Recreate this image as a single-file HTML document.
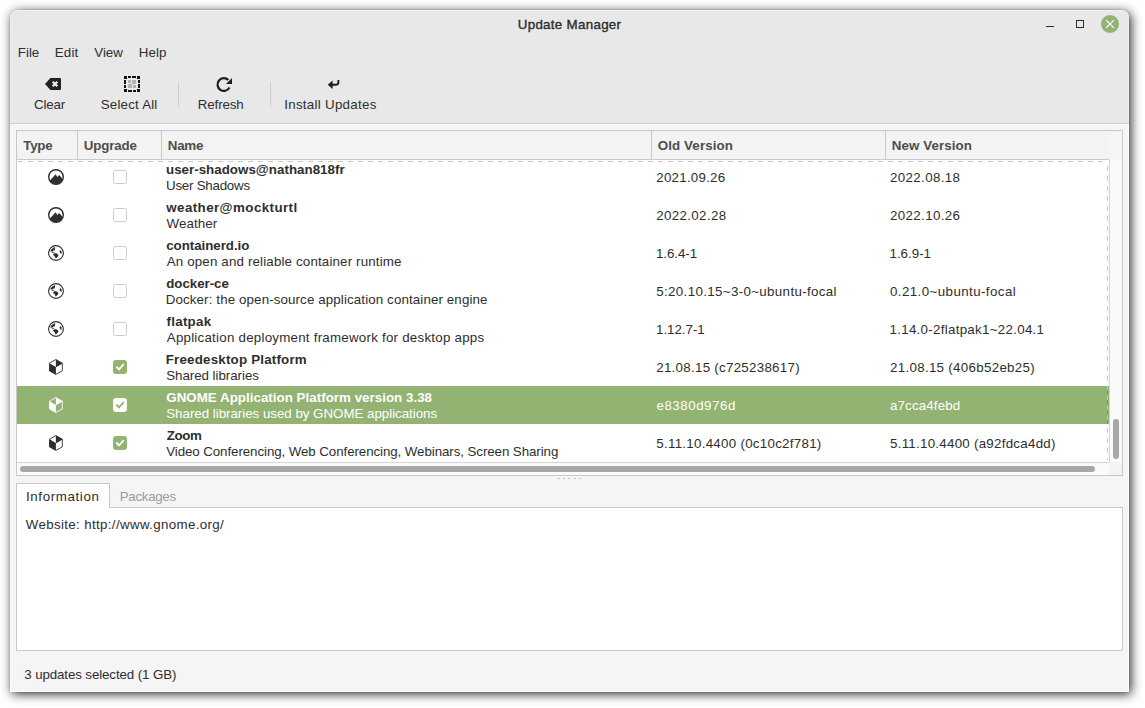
<!DOCTYPE html>
<html lang="en"><head><meta charset="utf-8"><title>Update Manager</title>
<style>
html,body{margin:0;padding:0}
body{width:1145px;height:708px;overflow:hidden;background:#fff;position:relative;font-family:"Liberation Sans", sans-serif;font-size:13.33px}
.abs,.t,.ic,.cb{position:absolute}
.t{white-space:pre;line-height:16px;height:16px}
.win{position:absolute;left:10px;top:10px;width:1119px;height:682px;background:#f5f5f5;border-radius:7px 7px 0 0;box-shadow:0 0 0 1px rgba(0,0,0,.05),2px 2px 11px 0 rgba(0,0,0,.84)}
.top{position:absolute;left:10px;top:10px;width:1119px;height:113px;background:#e8e8e8;border-radius:7px 7px 0 0;border-bottom:1px solid #cfcfcf}
.cb{width:12px;height:12px;border:1px solid #cdcdcd;border-radius:2.5px;background:#fff}
.sep{position:absolute;width:1px;background:#cfcfcf;top:82px;height:25px}
</style></head><body>
<div class="win"></div>
<div class="top"></div>
<div class="abs" style="left:16px;top:10px;width:1107px;height:1px;background:#f2f2f2"></div>
<div class="abs" style="left:1128px;top:17px;width:1px;height:675px;background:linear-gradient(180deg,#eee 0,#eee 106px,#cfcfcf 106px,#cfcfcf 107px,#fff 107px)"></div>
<div class="abs" style="left:10px;top:17px;width:1px;height:675px;background:linear-gradient(180deg,#eee 0,#eee 106px,#cfcfcf 106px,#cfcfcf 107px,#fbfbfb 107px)"></div>
<div class="abs" style="left:10px;top:691px;width:1119px;height:1px;background:#fff"></div>
<!-- window buttons -->
<div class="abs" style="left:1046px;top:26px;width:8px;height:1px;background:#2e2e2e"></div>
<div class="abs" style="left:1076px;top:20px;width:6px;height:6px;border:1px solid #2e2e2e"></div>
<div class="abs" style="left:1101px;top:15px;width:18px;height:18px;border-radius:9px;background:#92b372"></div>
<svg class="abs" style="left:1101px;top:15px" width="18" height="18" viewBox="0 0 18 18"><path d="M5.1 5.1 L12.9 12.9 M12.9 5.1 L5.1 12.9" stroke="#fff" stroke-width="1.25" fill="none"/></svg>
<!-- toolbar icons -->
<svg class="abs" style="left:45px;top:78px" width="16" height="12" viewBox="0 0 16 12"><path fill="#222" d="M5.4 0 H15 Q16 0 16 1 V11 Q16 12 15 12 H5.4 L0 6Z"/><path d="M7.7 3.7 L12.3 8.3 M12.3 3.7 L7.7 8.3" stroke="#ececec" stroke-width="2.2" fill="none"/></svg>
<svg class="abs" style="left:124px;top:76px" width="16" height="16" viewBox="0 0 16 16"><g fill="#141414"><rect x="0" y="0" width="3" height="3"/><rect x="13" y="0" width="3" height="3"/><rect x="0" y="13" width="3" height="3"/><rect x="13" y="13" width="3" height="3"/><rect x="4" y="0" width="3" height="2"/><rect x="8" y="0" width="4" height="2"/><rect x="4" y="14" width="4" height="2"/><rect x="9" y="14" width="3" height="2"/><rect x="0" y="4" width="2" height="4"/><rect x="0" y="9" width="2" height="3"/><rect x="14" y="4" width="2" height="3"/><rect x="14" y="8" width="2" height="4"/></g><g fill="#b3b3b3"><rect x="4" y="4" width="3" height="3"/><rect x="8" y="4" width="4" height="4"/><rect x="4" y="8" width="4" height="4"/><rect x="9" y="9" width="3" height="3"/></g></svg>
<svg class="abs" style="left:215px;top:76px" width="18" height="18" viewBox="0 0 18 18"><path d="M14.5 11.5 A6.35 6.35 0 1 1 13.4 4.1" fill="none" stroke="#1e1e1e" stroke-width="2.2"/><path fill="#1e1e1e" d="M17 1.9 V7.9 H11Z"/></svg>
<svg class="abs" style="left:327px;top:79px" width="14" height="12" viewBox="0 0 14 12"><path d="M11.4 1 V3.2 Q11.4 5.7 8.6 5.7 H4.5" fill="none" stroke="#1e1e1e" stroke-width="1.9"/><path fill="#1e1e1e" d="M0.8 5.7 L5.6 1.4 L5.6 10.0Z"/></svg>
<div class="sep" style="left:178px"></div>
<div class="sep" style="left:270px"></div>
<!-- table frame -->
<div class="abs" style="left:16px;top:130px;width:1105px;height:344px;border:1px solid #c8c8c8;background:#fff"></div>
<div class="abs" style="left:17px;top:131px;width:1092px;height:28px;background:#f3f3f3;border-bottom:1px solid #c8c8c8"></div>
<div class="abs" style="left:1109px;top:131px;width:13px;height:29px;background:#f5f5f5"></div>
<div class="abs" style="left:77px;top:131px;width:1px;height:28px;background:#c8c8c8"></div>
<div class="abs" style="left:161px;top:131px;width:1px;height:28px;background:#c8c8c8"></div>
<div class="abs" style="left:651px;top:131px;width:1px;height:28px;background:#c8c8c8"></div>
<div class="abs" style="left:885px;top:131px;width:1px;height:28px;background:#c8c8c8"></div>
<!-- selected row -->
<div class="abs" style="left:17px;top:386px;width:1092px;height:38px;background:#92b372"></div>
<!-- dashed focus lines -->
<div class="abs" style="left:18px;top:161px;width:1089px;height:1px;background:repeating-linear-gradient(90deg,#cacaca 0 5px,transparent 5px 10px)"></div>
<div class="abs" style="left:1107px;top:162px;width:1px;height:224px;background:repeating-linear-gradient(180deg,transparent 0 4px,#cacaca 4px 9px,transparent 9px 10px)"></div>
<div class="abs" style="left:1107px;top:386px;width:1px;height:38px;background:repeating-linear-gradient(180deg,#b7cda0 0 4px,#7d9a60 4px 9px,#b7cda0 9px 10px)"></div>
<div class="abs" style="left:1107px;top:424px;width:1px;height:36px;background:repeating-linear-gradient(180deg,transparent 0 4px,#cacaca 4px 9px,transparent 9px 10px)"></div>
<!-- scrollbars -->
<div class="abs" style="left:1109px;top:160px;width:12px;height:302px;background:#fafafa;border-left:1px solid #d6d6d6"></div>
<div class="abs" style="left:1113px;top:419px;width:6px;height:40px;border-radius:3px;background:#a8a8a8"></div>
<div class="abs" style="left:17px;top:462px;width:1105px;height:12px;background:#fafafa;border-top:1px solid #d6d6d6"></div>
<div class="abs" style="left:1109px;top:462px;width:13px;height:13px;background:#f3f3f3"></div>
<div class="abs" style="left:20px;top:466px;width:1075px;height:6px;border-radius:3px;background:#a8a8a8"></div>
<!-- pane handle -->
<svg class="abs" style="left:556px;top:477px" width="28" height="3" viewBox="0 0 28 3"><g fill="#bcbcbc"><rect x="1.7" y="1" width="2" height="1"/><rect x="6.9" y="1" width="2" height="1"/><rect x="12.4" y="1" width="2" height="1"/><rect x="17.9" y="1" width="2" height="1"/><rect x="23.3" y="1" width="2" height="1"/></g></svg>
<!-- notebook -->
<div class="abs" style="left:16px;top:507px;width:1105px;height:142px;border:1px solid #c8c8c8;background:#fff"></div>
<div class="abs" style="left:16px;top:483px;width:92px;height:23px;border:1px solid #c8c8c8;border-bottom:none;background:#fff"></div>
<div class="abs" style="left:17px;top:507px;width:92px;height:1px;background:#fff"></div>
<svg class="ic" style="left:48px;top:169px" width="16" height="16" viewBox="0 0 16 16"><defs><clipPath id="c56_177"><circle cx="8" cy="8" r="7.2"/></clipPath></defs><path clip-path="url(#c56_177)" fill="#2e2e2e" d="M0 13.5 L7.7 5.2 L9.3 8.0 L11.2 6.0 L16 11.5 L16 16 L0 16Z"/><circle cx="8" cy="8" r="7.3" fill="none" stroke="#2e2e2e" stroke-width="1.4"/></svg>
<div class="cb" style="left:113px;top:170px"></div>
<svg class="ic" style="left:48px;top:207px" width="16" height="16" viewBox="0 0 16 16"><defs><clipPath id="c56_215"><circle cx="8" cy="8" r="7.2"/></clipPath></defs><path clip-path="url(#c56_215)" fill="#2e2e2e" d="M0 13.5 L7.7 5.2 L9.3 8.0 L11.2 6.0 L16 11.5 L16 16 L0 16Z"/><circle cx="8" cy="8" r="7.3" fill="none" stroke="#2e2e2e" stroke-width="1.4"/></svg>
<div class="cb" style="left:113px;top:208px"></div>
<svg class="ic" style="left:48px;top:245px" width="16" height="16" viewBox="0 0 16 16"><circle cx="8" cy="8" r="7.4" fill="none" stroke="#2e2e2e" stroke-width="1.1"/><path fill="#2e2e2e" d="M2.2 6.2 L3.2 4.6 L4.0 4.0 L4.4 3.2 L5.2 3.4 L5.6 2.6 L6.5 2.2 L7.3 2.5 L6.9 3.6 L7.0 4.6 L6.8 5.6 L6.0 5.4 L5.4 5.2 L5.2 6.0 L5.0 6.6 L3.6 6.5Z"/><path fill="#2e2e2e" d="M3.4 6.5 L6.5 7.7 L6.3 8.4 L3.6 7.2Z"/><path fill="#2e2e2e" d="M6.5 8.2 L8.0 8.2 L9.3 8.7 L10.4 9.9 L10.1 11.3 L9.0 12.4 L7.6 13.5 L7.0 12.1 L6.5 11.0 L5.1 10.1 L5.3 9.3Z"/><path fill="#2e2e2e" d="M12.4 5.1 L13.3 6.2 L13.7 8.2 L13.3 9.0 L12.1 7.9 L11.6 6.5Z"/></svg>
<div class="cb" style="left:113px;top:246px"></div>
<svg class="ic" style="left:48px;top:283px" width="16" height="16" viewBox="0 0 16 16"><circle cx="8" cy="8" r="7.4" fill="none" stroke="#2e2e2e" stroke-width="1.1"/><path fill="#2e2e2e" d="M2.2 6.2 L3.2 4.6 L4.0 4.0 L4.4 3.2 L5.2 3.4 L5.6 2.6 L6.5 2.2 L7.3 2.5 L6.9 3.6 L7.0 4.6 L6.8 5.6 L6.0 5.4 L5.4 5.2 L5.2 6.0 L5.0 6.6 L3.6 6.5Z"/><path fill="#2e2e2e" d="M3.4 6.5 L6.5 7.7 L6.3 8.4 L3.6 7.2Z"/><path fill="#2e2e2e" d="M6.5 8.2 L8.0 8.2 L9.3 8.7 L10.4 9.9 L10.1 11.3 L9.0 12.4 L7.6 13.5 L7.0 12.1 L6.5 11.0 L5.1 10.1 L5.3 9.3Z"/><path fill="#2e2e2e" d="M12.4 5.1 L13.3 6.2 L13.7 8.2 L13.3 9.0 L12.1 7.9 L11.6 6.5Z"/></svg>
<div class="cb" style="left:113px;top:284px"></div>
<svg class="ic" style="left:48px;top:321px" width="16" height="16" viewBox="0 0 16 16"><circle cx="8" cy="8" r="7.4" fill="none" stroke="#2e2e2e" stroke-width="1.1"/><path fill="#2e2e2e" d="M2.2 6.2 L3.2 4.6 L4.0 4.0 L4.4 3.2 L5.2 3.4 L5.6 2.6 L6.5 2.2 L7.3 2.5 L6.9 3.6 L7.0 4.6 L6.8 5.6 L6.0 5.4 L5.4 5.2 L5.2 6.0 L5.0 6.6 L3.6 6.5Z"/><path fill="#2e2e2e" d="M3.4 6.5 L6.5 7.7 L6.3 8.4 L3.6 7.2Z"/><path fill="#2e2e2e" d="M6.5 8.2 L8.0 8.2 L9.3 8.7 L10.4 9.9 L10.1 11.3 L9.0 12.4 L7.6 13.5 L7.0 12.1 L6.5 11.0 L5.1 10.1 L5.3 9.3Z"/><path fill="#2e2e2e" d="M12.4 5.1 L13.3 6.2 L13.7 8.2 L13.3 9.0 L12.1 7.9 L11.6 6.5Z"/></svg>
<div class="cb" style="left:113px;top:322px"></div>
<svg class="ic" style="left:48px;top:359px" width="16" height="16" viewBox="0 0 16 16"><path fill="#ffffff" stroke="#2e2e2e" stroke-width="0.9" stroke-linejoin="round" d="M7.9 0.5 L14.3 4.2 L14.3 11.9 L7.9 15.4 L1.5 11.9 L1.5 4.2Z"/><path fill="#2e2e2e" d="M1.5 4.2 L7.9 7.9 L7.9 15.4 L1.5 11.9Z"/><path fill="#2e2e2e" d="M7.9 0.5 L14.3 4.2 L7.9 7.9Z"/><path fill="none" stroke="#2e2e2e" stroke-width="0.9" d="M7.9 7.9 L14.3 4.2"/></svg>
<div class="cb on" style="left:113px;top:360px;background:#92b372;border-color:#92b372"><svg width="14" height="14" viewBox="0 0 14 14" style="position:absolute;left:-1px;top:-1px"><path d="M3.9 7.3 L6.0 9.3 L10.1 4.9" fill="none" stroke="#ffffff" stroke-width="1.9" stroke-linecap="square" stroke-linejoin="miter"/></svg></div>
<svg class="ic" style="left:48px;top:397px" width="16" height="16" viewBox="0 0 16 16"><path fill="#92b372" stroke="#ffffff" stroke-width="0.9" stroke-linejoin="round" d="M7.9 0.5 L14.3 4.2 L14.3 11.9 L7.9 15.4 L1.5 11.9 L1.5 4.2Z"/><path fill="#ffffff" d="M1.5 4.2 L7.9 7.9 L7.9 15.4 L1.5 11.9Z"/><path fill="#ffffff" d="M7.9 0.5 L14.3 4.2 L7.9 7.9Z"/><path fill="none" stroke="#ffffff" stroke-width="0.9" d="M7.9 7.9 L14.3 4.2"/></svg>
<div class="cb on" style="left:113px;top:398px;background:#ffffff;border-color:#ffffff"><svg width="14" height="14" viewBox="0 0 14 14" style="position:absolute;left:-1px;top:-1px"><path d="M3.9 7.3 L6.0 9.3 L10.1 4.9" fill="none" stroke="#92b372" stroke-width="1.9" stroke-linecap="square" stroke-linejoin="miter"/></svg></div>
<svg class="ic" style="left:48px;top:435px" width="16" height="16" viewBox="0 0 16 16"><path fill="#ffffff" stroke="#2e2e2e" stroke-width="0.9" stroke-linejoin="round" d="M7.9 0.5 L14.3 4.2 L14.3 11.9 L7.9 15.4 L1.5 11.9 L1.5 4.2Z"/><path fill="#2e2e2e" d="M1.5 4.2 L7.9 7.9 L7.9 15.4 L1.5 11.9Z"/><path fill="#2e2e2e" d="M7.9 0.5 L14.3 4.2 L7.9 7.9Z"/><path fill="none" stroke="#2e2e2e" stroke-width="0.9" d="M7.9 7.9 L14.3 4.2"/></svg>
<div class="cb on" style="left:113px;top:436px;background:#92b372;border-color:#92b372"><svg width="14" height="14" viewBox="0 0 14 14" style="position:absolute;left:-1px;top:-1px"><path d="M3.9 7.3 L6.0 9.3 L10.1 4.9" fill="none" stroke="#ffffff" stroke-width="1.9" stroke-linecap="square" stroke-linejoin="miter"/></svg></div>
<span class="t" id="title" style="left:517.75px;top:17.00px;letter-spacing:0.307px;color:#2b2b2b;-webkit-text-stroke:0.35px #2b2b2b;">Update Manager</span>
<span class="t" id="m1" style="left:17.75px;top:45.00px;letter-spacing:0.016px;color:#2e2e2e;">File</span>
<span class="t" id="m2" style="left:54.75px;top:45.00px;letter-spacing:0.166px;color:#2e2e2e;">Edit</span>
<span class="t" id="m3" style="left:94.25px;top:45.00px;letter-spacing:0.000px;color:#2e2e2e;">View</span>
<span class="t" id="m4" style="left:138.75px;top:45.00px;letter-spacing:0.117px;color:#2e2e2e;">Help</span>
<span class="t" id="tb1" style="left:34.00px;top:97.00px;letter-spacing:-0.188px;color:#2e2e2e;">Clear</span>
<span class="t" id="tb2" style="left:100.75px;top:97.00px;letter-spacing:0.195px;color:#2e2e2e;">Select All</span>
<span class="t" id="tb3" style="left:197.75px;top:97.00px;letter-spacing:-0.116px;color:#2e2e2e;">Refresh</span>
<span class="t" id="tb4" style="left:284.25px;top:97.00px;letter-spacing:0.277px;color:#2e2e2e;">Install Updates</span>
<span class="t" id="h1" style="left:23.25px;top:138.00px;letter-spacing:-0.249px;color:#4d4d4d;font-weight:bold;">Type</span>
<span class="t" id="h2" style="left:83.75px;top:138.00px;letter-spacing:-0.166px;color:#4d4d4d;font-weight:bold;">Upgrade</span>
<span class="t" id="h3" style="left:167.75px;top:138.00px;letter-spacing:-0.215px;color:#4d4d4d;font-weight:bold;">Name</span>
<span class="t" id="h4" style="left:657.75px;top:138.00px;letter-spacing:0.110px;color:#4d4d4d;font-weight:bold;">Old Version</span>
<span class="t" id="h5" style="left:891.75px;top:138.00px;letter-spacing:0.090px;color:#4d4d4d;font-weight:bold;">New Version</span>
<span class="t" id="r0n" style="left:166.00px;top:162.00px;letter-spacing:0.019px;color:#2e2e2e;font-weight:bold;">user-shadows@nathan818fr</span>
<span class="t" id="r0d" style="left:166.00px;top:178.00px;letter-spacing:-0.239px;color:#2e2e2e;">User Shadows</span>
<span class="t" id="r0o" style="left:656.25px;top:170.00px;letter-spacing:0.247px;color:#2e2e2e;">2021.09.26</span>
<span class="t" id="r0v" style="left:890.00px;top:170.00px;letter-spacing:0.361px;color:#2e2e2e;">2022.08.18</span>
<span class="t" id="r1n" style="left:166.30px;top:200.00px;letter-spacing:0.422px;color:#2e2e2e;font-weight:bold;">weather@mockturtl</span>
<span class="t" id="r1d" style="left:166.55px;top:216.00px;letter-spacing:0.083px;color:#2e2e2e;">Weather</span>
<span class="t" id="r1o" style="left:656.25px;top:208.00px;letter-spacing:0.350px;color:#2e2e2e;">2022.02.28</span>
<span class="t" id="r1v" style="left:890.00px;top:208.00px;letter-spacing:0.361px;color:#2e2e2e;">2022.10.26</span>
<span class="t" id="r2n" style="left:166.25px;top:238.00px;letter-spacing:-0.047px;color:#2e2e2e;font-weight:bold;">containerd.io</span>
<span class="t" id="r2d" style="left:166.75px;top:254.00px;letter-spacing:0.157px;color:#2e2e2e;">An open and reliable container runtime</span>
<span class="t" id="r2o" style="left:656.00px;top:246.00px;letter-spacing:-0.073px;color:#2e2e2e;">1.6.4-1</span>
<span class="t" id="r2v" style="left:889.50px;top:246.00px;letter-spacing:0.000px;color:#2e2e2e;">1.6.9-1</span>
<span class="t" id="r3n" style="left:166.25px;top:276.00px;letter-spacing:-0.052px;color:#2e2e2e;font-weight:bold;">docker-ce</span>
<span class="t" id="r3d" style="left:165.75px;top:292.00px;letter-spacing:0.119px;color:#2e2e2e;">Docker: the open-source application container engine</span>
<span class="t" id="r3o" style="left:656.25px;top:284.00px;letter-spacing:0.350px;color:#2e2e2e;">5:20.10.15~3-0~ubuntu-focal</span>
<span class="t" id="r3v" style="left:890.00px;top:284.00px;letter-spacing:0.416px;color:#2e2e2e;">0.21.0~ubuntu-focal</span>
<span class="t" id="r4n" style="left:166.50px;top:314.00px;letter-spacing:0.275px;color:#2e2e2e;font-weight:bold;">flatpak</span>
<span class="t" id="r4d" style="left:166.75px;top:330.00px;letter-spacing:0.237px;color:#2e2e2e;">Application deployment framework for desktop apps</span>
<span class="t" id="r4o" style="left:656.00px;top:322.00px;letter-spacing:-0.025px;color:#2e2e2e;">1.12.7-1</span>
<span class="t" id="r4v" style="left:889.50px;top:322.00px;letter-spacing:0.289px;color:#2e2e2e;">1.14.0-2flatpak1~22.04.1</span>
<span class="t" id="r5n" style="left:165.75px;top:352.00px;letter-spacing:0.208px;color:#2e2e2e;font-weight:bold;">Freedesktop Platform</span>
<span class="t" id="r5d" style="left:166.25px;top:368.00px;letter-spacing:-0.045px;color:#2e2e2e;">Shared libraries</span>
<span class="t" id="r5o" style="left:656.25px;top:360.00px;letter-spacing:0.275px;color:#2e2e2e;">21.08.15 (c725238617)</span>
<span class="t" id="r5v" style="left:890.00px;top:360.00px;letter-spacing:0.305px;color:#2e2e2e;">21.08.15 (406b52eb25)</span>
<span class="t" id="r6n" style="left:166.25px;top:390.00px;letter-spacing:0.030px;color:#ffffff;font-weight:bold;">GNOME Application Platform version 3.38</span>
<span class="t" id="r6d" style="left:166.25px;top:406.00px;letter-spacing:-0.023px;color:#ffffff;">Shared libraries used by GNOME applications</span>
<span class="t" id="r6o" style="left:656.50px;top:398.00px;letter-spacing:0.525px;color:#ffffff;">e8380d976d</span>
<span class="t" id="r6v" style="left:890.00px;top:398.00px;letter-spacing:0.139px;color:#ffffff;">a7cca4febd</span>
<span class="t" id="r7n" style="left:166.65px;top:428.00px;letter-spacing:-0.382px;color:#2e2e2e;font-weight:bold;">Zoom</span>
<span class="t" id="r7d" style="left:166.20px;top:444.00px;letter-spacing:-0.082px;color:#2e2e2e;">Video Conferencing, Web Conferencing, Webinars, Screen Sharing</span>
<span class="t" id="r7o" style="left:656.25px;top:436.00px;letter-spacing:0.280px;color:#2e2e2e;">5.11.10.4400 (0c10c2f781)</span>
<span class="t" id="r7v" style="left:890.00px;top:436.00px;letter-spacing:0.265px;color:#2e2e2e;">5.11.10.4400 (a92fdca4dd)</span>
<span class="t" id="tab1" style="left:26.00px;top:489.00px;letter-spacing:0.620px;color:#2e2e2e;">Information</span>
<span class="t" id="tab2" style="left:119.75px;top:489.00px;letter-spacing:-0.306px;color:#9b9b9b;">Packages</span>
<span class="t" id="info" style="left:25.75px;top:517.00px;letter-spacing:0.346px;color:#2e2e2e;">Website: http://www.gnome.org/</span>
<span class="t" id="status" style="left:24.25px;top:667.00px;letter-spacing:-0.114px;color:#2e2e2e;">3 updates selected (1 GB)</span>
</body></html>
